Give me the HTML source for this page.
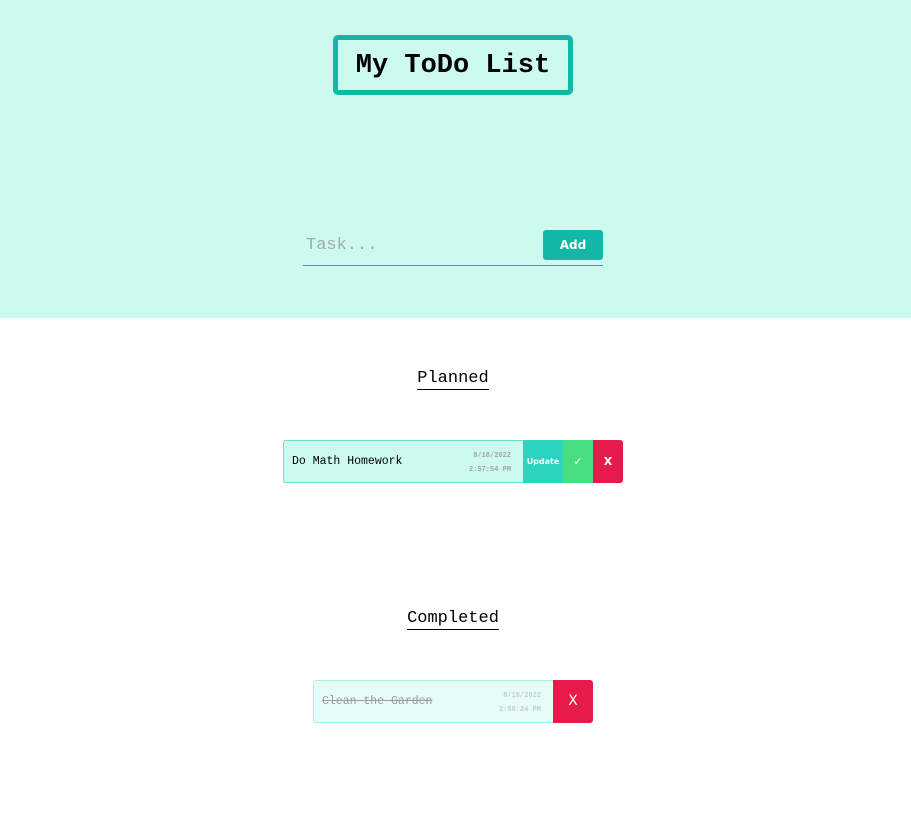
<!DOCTYPE html>
<html><head><style>
body{margin:0;width:911px;height:831px;background:#fff;font-family:"Liberation Mono","DejaVu Sans Mono",monospace;}
.top{position:absolute;left:0;top:0;width:911px;height:318px;background:#ccfaef;}
.title{position:absolute;left:333px;top:35px;width:230px;height:50px;border:5px solid #12b8a5;border-radius:5px;font-weight:bold;font-size:27px;line-height:52px;text-align:center;color:#000;}
.inp{position:absolute;left:303px;top:228px;width:300px;height:37px;border-bottom:1px solid #12b8a5;}
.ph{position:absolute;left:3px;top:8px;font-size:17px;color:#a3a8ad;}
.add{position:absolute;left:240px;top:2px;width:60px;height:30px;background:#12b8a5;border-radius:3px;color:#fff;font:bold 12px/31px "DejaVu Sans",sans-serif;text-align:center;}
h2{position:absolute;left:0;width:906px;margin:0;text-align:center;font-weight:normal;font-size:17px;}
h2 span{border-bottom:1px solid #000;padding-bottom:1px;}
.card{position:absolute;height:43px;display:flex;}
.main{position:relative;width:240px;box-sizing:border-box;height:43px;border:1px solid;border-right:none;border-radius:3px 0 0 3px;font-size:11.5px;}
.main .t{position:absolute;left:8px;top:14px;}
.main .d{position:absolute;right:12px;top:8px;font-size:7px;line-height:14px;text-align:right;font-weight:bold;}
.b{height:43px;color:#fff;font:bold 11px/43px "DejaVu Sans",sans-serif;text-align:center;}
</style></head><body>
<div class="top">
<div class="title">My ToDo List</div>
<div class="inp"><div class="ph">Task...</div><div class="add">Add</div></div>
</div>
<h2 style="top:369px"><span>Planned</span></h2>
<div class="card" style="left:283px;top:440px">
<div class="main" style="background:#ccfaef;border-color:#5fe3cc"><div class="t">Do Math Homework</div><div class="d" style="color:#a0a4aa">8/18/2022<br>2:57:54 PM</div></div>
<div class="b" style="width:40px;background:#2ad4bf;font-size:8px">Update</div>
<div class="b" style="width:30px;background:#47de82">✓</div>
<div class="b" style="width:30px;background:#e61b4a;border-radius:0 3px 3px 0">X</div>
</div>
<h2 style="top:609px"><span>Completed</span></h2>
<div class="card" style="left:313px;top:680px">
<div class="main" style="background:#e6fcf7;border-color:#a6f0e3"><div class="t" style="color:#9a9a9a;text-decoration:line-through">Clean the Garden</div><div class="d" style="color:#c5cbd0">8/18/2022<br>2:58:24 PM</div></div>
<div class="b" style="width:40px;background:#e61b4a;border-radius:0 3px 3px 0;font-size:14px;font-weight:normal">X</div>
</div>
</body></html>
